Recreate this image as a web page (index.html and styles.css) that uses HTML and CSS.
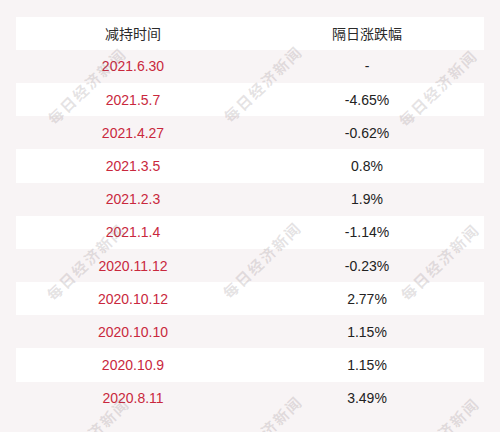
FILE: index.html
```html
<!DOCTYPE html>
<html lang="zh">
<head>
<meta charset="utf-8">
<link rel="stylesheet" href="styles.css">
</head>
<body>
<div class="page">
  <div class="table">
    <div class="row head"><div class="cell">减持时间</div><div class="cell">隔日涨跌幅</div></div>
    <div class="row"><div class="cell date">2021.6.30</div><div class="cell">-</div></div>
    <div class="row alt"><div class="cell date">2021.5.7</div><div class="cell">-4.65%</div></div>
    <div class="row"><div class="cell date">2021.4.27</div><div class="cell">-0.62%</div></div>
    <div class="row alt"><div class="cell date">2021.3.5</div><div class="cell">0.8%</div></div>
    <div class="row"><div class="cell date">2021.2.3</div><div class="cell">1.9%</div></div>
    <div class="row alt"><div class="cell date">2021.1.4</div><div class="cell">-1.14%</div></div>
    <div class="row"><div class="cell date">2020.11.12</div><div class="cell">-0.23%</div></div>
    <div class="row alt"><div class="cell date">2020.10.12</div><div class="cell">2.77%</div></div>
    <div class="row"><div class="cell date">2020.10.10</div><div class="cell">1.15%</div></div>
    <div class="row alt"><div class="cell date">2020.10.9</div><div class="cell">1.15%</div></div>
    <div class="row"><div class="cell date">2020.8.11</div><div class="cell">3.49%</div></div>
  </div>
  <div class="wm w1">每日经济新闻</div>
  <div class="wm w2">每日经济新闻</div>
  <div class="wm w3">每日经济新闻</div>
  <div class="wm w4">每日经济新闻</div>
  <div class="wm w5">每日经济新闻</div>
  <div class="wm w6">每日经济新闻</div>
  <div class="wm w7">每日经济新闻</div>
  <div class="wm w8">每日经济新闻</div>
  <div class="wm w9">每日经济新闻</div>
</div>
</body>
</html>
```
FILE: styles.css
```css
html, body {
  margin: 0;
  padding: 0;
}
body {
  background: #f8f4f5;
  font-family: "Liberation Sans", Arial, "Noto Sans CJK SC", sans-serif;
}
.page {
  position: relative;
  width: 500px;
  height: 432px;
  overflow: hidden;
  box-sizing: border-box;
  padding: 16.6px 16px 0 16px;
}
.table {
  display: flex;
  flex-direction: column;
}
.row {
  display: grid;
  grid-template-columns: 1fr 1fr;
  height: 33.2px;
  align-items: center;
  font-size: 14px;
  color: #222;
}
.row.head, .row.alt {
  background: #ffffff;
}
.cell {
  text-align: center;
}
.head .cell {
  color: #2a2a2a;
  font-family: "Noto Sans CJK SC", sans-serif;
}
.date {
  color: #c9283d;
}
.wm {
  position: absolute;
  width: 120px;
  margin-left: -60px;
  margin-top: -10px;
  text-align: center;
  font-family: "Noto Sans CJK SC", serif;
  font-weight: 700;
  font-size: 15px;
  line-height: 20px;
  letter-spacing: 2px;
  color: rgba(120, 110, 112, 0.2);
  transform: rotate(-44deg);
  white-space: nowrap;
  pointer-events: none;
}
.w1 { left: 87px; top: 86px; }
.w2 { left: 263px; top: 84px; }
.w3 { left: 438px; top: 88px; }
.w4 { left: 86px; top: 262px; }
.w5 { left: 262px; top: 260px; }
.w6 { left: 440px; top: 262px; }
.w7 { left: 90px; top: 436px; }
.w8 { left: 263px; top: 434px; }
.w9 { left: 440px; top: 436px; }
```
